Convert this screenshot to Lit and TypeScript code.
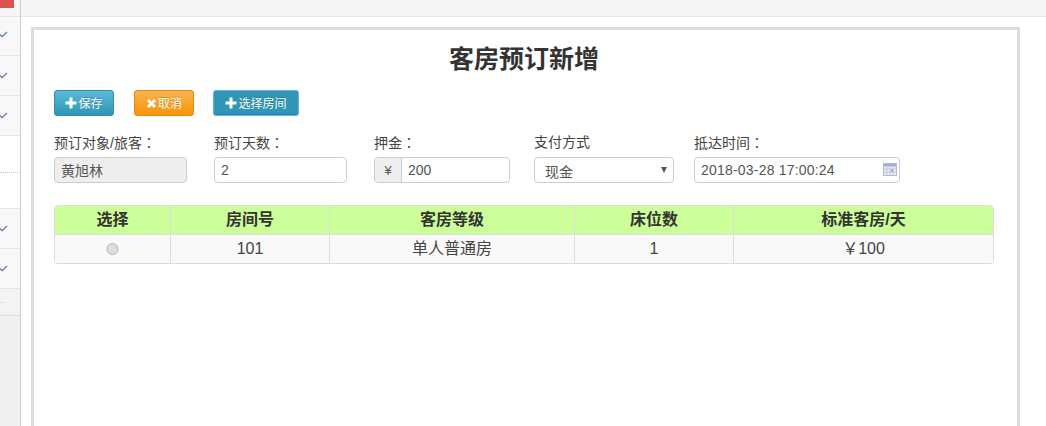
import { LitElement, html, css, svg } from "lit";
import { customElement } from "lit/decorators.js";

const check = svg`<svg class="check" width="9" height="7" viewBox="0 0 9 7"><path d="M1 3.6 L3.2 5.6 L8 1" fill="none" stroke="#5f7f9f" stroke-width="1.3"/></svg>`;
const plus = html`<svg class="ic" width="12" height="12" viewBox="0 0 12 12"><path d="M4.5 0.5h3v4h4v3h-4v4h-3v-4h-4v-3h4z" fill="#fff"/></svg>`;
const cross = html`<svg class="ic" width="11" height="11" viewBox="0 0 11 11"><path d="M1 3 L3 1 L5.5 3.5 L8 1 L10 3 L7.5 5.5 L10 8 L8 10 L5.5 7.500 L3 10 L1 8 L3.5 5.5z" fill="#fff"/></svg>`;
const calendar = html`<svg class="cal" width="14" height="13" viewBox="0 0 14 13">
  <rect x="0.5" y="0.5" width="13" height="12" fill="#e8edf7" stroke="#aebbd6"/>
  <rect x="1" y="1" width="12" height="2.5" fill="#9db0d4"/>
  <path d="M1 6h12M1 9h12M4 4v8M7 4v8M10 4v8" stroke="#bcc8e0" stroke-width="1"/>
  <rect x="8" y="6.500" width="2" height="2.500" fill="#e09a90"/>
</svg>`;

@customElement("app-root")
export class AppRoot extends LitElement {
  static styles = css`
    :host {
      display: flex;
      width: 1046px;
      height: 426px;
      overflow: hidden;
      background: #fff;
      font-family: "Liberation Sans", "Noto Sans CJK SC", sans-serif;
      font-size: 14px;
      color: #444;
    }
    .side {
      width: 20px;
      flex: none;
      border-right: 1px solid #ccc;
      background: #f0f0f0;
      display: flex;
      flex-direction: column;
    }
    .side-top { height: 16px; flex: none; background: #f5f5f5; border-bottom: 1px solid #e5e5e5; }
    .red { width: 14px; height: 8px; background: #d9534f; }
    .side-row {
      background: #f8f8f8;
      border-top: 1px solid #e5e5e5;
      height: 39px;
      flex: none;
      display: flex;
      align-items: center;
    }
    .first { border-top: none; height: 34px; padding-bottom: 4px; }
    .check { margin-left: -1px; }
    .blank { background: #fff; border-top: 1px solid #e5e5e5; height: 36px; flex: none; border-bottom: 1px dotted #ccc; }
    .blank2 { background: #fff; height: 35px; flex: none; }
    .div { height: 26px; flex: none; background: #f3f3f3; border-top: 1px solid #e5e5e5; border-bottom: 1px solid #ddd; display: flex; align-items: center; }
    .div i { display: block; width: 5px; height: 1px; background: #ddd; }
    .main { flex: 1; min-width: 0; display: flex; flex-direction: column; }
    .top { height: 16px; flex: none; background: #f5f5f5; border-bottom: 1px solid #e5e5e5; }
    .wrap { flex: 1; padding: 10px 26px 0 10px; min-height: 0; }
    .box {
      border: 3px solid #ddd;
      border-bottom: none;
      height: 500px;
      padding: 0 23px 0 20px;
      box-sizing: border-box;
    }
    h1 {
      margin: 0;
      padding-top: 13px;
      height: 60px;
      box-sizing: border-box;
      font-size: 25px;
      line-height: 32px;
      font-weight: bold;
      color: #333;
      text-align: center;
    }
    .btns { display: flex; height: 26px; align-items: center; }
    .btn {
      box-sizing: border-box;
      height: 26px;
      width: 60px;
      margin-right: 20px;
      border-radius: 3px;
      color: #fff;
      font-size: 12px;
      line-height: 12px;
      display: flex;
      align-items: center;
      justify-content: center;
      gap: 1px;
      text-shadow: 0 -1px 0 rgba(0,0,0,.2);
    }
    .btn span { padding-top: 1px; }
    .ic { flex: none; }
    .info { background: linear-gradient(#5bb9d9, #2f96b4); border: 1px solid #2f8cab; }
    .warn { background: linear-gradient(#fbb450, #f89406); border: 1px solid #e08a0b; }
    .sel {
      width: 86px;
      margin-left: -1px;
      background: #2f96b4;
      border: 1px solid #6ea6ef;
      box-shadow: inset 0 -1px 0 #2a86a1;
    }
    .form { display: flex; margin-top: 16px; }
    .f { width: 160px; flex: none; display: flex; flex-direction: column; }
    .lbl { height: 20px; line-height: 20px; font-size: 14px; color: #444; }
    .colon { font-family: "Noto Sans CJK TC", sans-serif; }
    .ctl {
      box-sizing: border-box;
      height: 26px;
      margin-top: 5px;
      border: 1px solid #ccc;
      border-radius: 4px;
      display: flex;
      align-items: center;
      padding-left: 6px;
      color: #555;
      background: #fff;
    }
    .w133 { width: 133px; }
    .dis { background: #eee; }
    .w136 { width: 136px; padding-left: 0; overflow: hidden; }
    .add {
      width: 27px;
      height: 100%;
      flex: none;
      box-sizing: border-box;
      background: #eee;
      border-right: 1px solid #ccc;
      display: flex;
      align-items: center;
      justify-content: center;
      font-size: 13px;
    }
    .w136 .v { padding-left: 6px; }
    .w140 { width: 140px; position: relative; padding-left: 10px; overflow: hidden; align-items: flex-start; }
    .w140 .v { display: block; height: 21px; line-height: 28px; overflow: hidden; }
    .arrow {
      position: absolute;
      right: 6px;
      top: 9px;
      width: 0;
      height: 0;
      border-left: 3px solid transparent;
      border-right: 3px solid transparent;
      border-top: 6px solid #555;
    }
    .w206 { width: 206px; position: relative; }
    .date { letter-spacing: .2px; }
    .cal { position: absolute; right: 2px; top: 5px; }
    table {
      margin-top: 22px;
      width: 940px;
      table-layout: fixed;
      border-collapse: separate;
      border-spacing: 0;
      border: 1px solid #ddd;
      border-radius: 4px;
      overflow: hidden;
      box-sizing: border-box;
    }
    th, td {
      padding: 0;
      text-align: center;
      border-left: 1px solid #ddd;
      box-sizing: border-box;
    }
    th:first-child, td:first-child { border-left: none; }
    th {
      height: 29px;
      background: #ccff99;
      font-size: 16px;
      line-height: 20px;
      color: #333;
      border-bottom: 1px solid #ddd;
      font-weight: bold;
    }
    td { height: 28px; background: #f9f9f9; font-size: 16px; line-height: 20px; color: #444; }
    .radio {
      display: block;
      margin: 0 auto;
      width: 12px;
      height: 12px;
      box-sizing: border-box;
      border-radius: 50%;
      border: 1px solid #b5b5b5;
      background: #dedede;
      box-shadow: 0 1px 0 #eee;
      transform: translateX(-0.5px);
    }
    .c1 { width: 115px; }
    .c2 { width: 159px; }
    .c3 { width: 245px; }
    .c4 { width: 159px; }
    .c5 { width: 260px; }
  `;

  render() {
    const colon = html`<span class="colon">：</span>`;
    return html`
      <div class="side">
        <div class="side-top"><div class="red"></div></div>
        <div class="side-row first">${check}</div>
        <div class="side-row">${check}</div>
        <div class="side-row">${check}</div>
        <div class="blank"></div>
        <div class="blank2"></div>
        <div class="side-row">${check}</div>
        <div class="side-row">${check}</div>
        <div class="div"><i></i></div>
      </div>
      <div class="main">
        <div class="top"></div>
        <div class="wrap">
          <div class="box">
            <h1>客房预订新增</h1>
            <div class="btns">
              <div class="btn info">${plus}<span>保存</span></div>
              <div class="btn warn">${cross}<span>取消</span></div>
              <div class="btn sel">${plus}<span>选择房间</span></div>
            </div>
            <div class="form">
              <div class="f">
                <div class="lbl">预订对象/旅客${colon}</div>
                <div class="ctl w133 dis">黄旭林</div>
              </div>
              <div class="f">
                <div class="lbl">预订天数${colon}</div>
                <div class="ctl w133">2</div>
              </div>
              <div class="f">
                <div class="lbl">押金${colon}</div>
                <div class="ctl w136"><span class="add">¥</span><span class="v">200</span></div>
              </div>
              <div class="f">
                <div class="lbl">支付方式</div>
                <div class="ctl w140"><span class="v">现金</span><span class="arrow"></span></div>
              </div>
              <div class="f">
                <div class="lbl">抵达时间${colon}</div>
                <div class="ctl w206"><span class="date">2018-03-28 17:00:24</span>${calendar}</div>
              </div>
            </div>
            <table>
              <colgroup>
                <col class="c1" /><col class="c2" /><col class="c3" /><col class="c4" /><col class="c5" />
              </colgroup>
              <thead>
                <tr><th>选择</th><th>房间号</th><th>客房等级</th><th>床位数</th><th>标准客房/天</th></tr>
              </thead>
              <tbody>
                <tr><td><span class="radio"></span></td><td>101</td><td>单人普通房</td><td>1</td><td>￥100</td></tr>
              </tbody>
            </table>
          </div>
        </div>
      </div>
    `;
  }
}
